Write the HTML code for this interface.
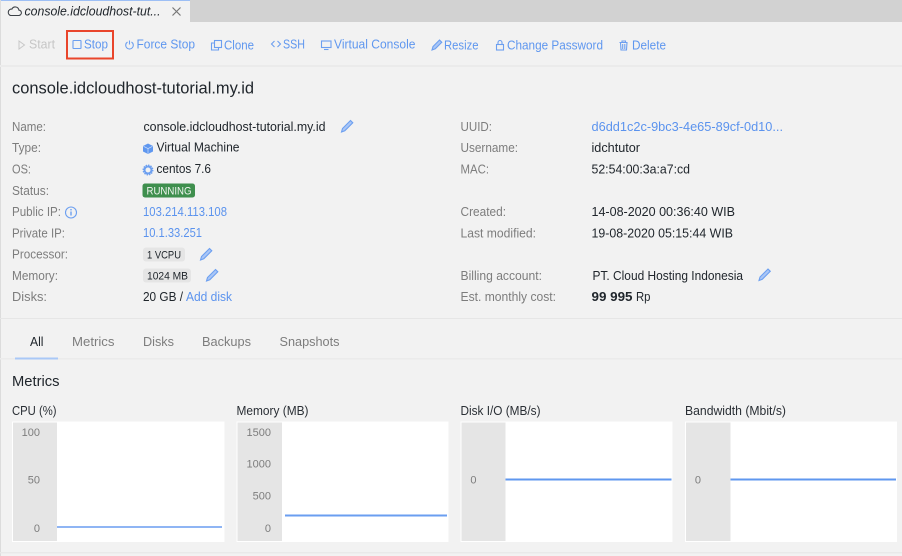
<!DOCTYPE html>
<html><head><meta charset="utf-8"><style>
html,body{margin:0;padding:0;background:#f2f2f2;width:902px;height:556px;overflow:hidden}
svg{display:block;position:absolute;left:0;top:0;filter:blur(.3px)}
text{font-family:"Liberation Sans",sans-serif;font-size:12.6px;fill:#20262c}
.l{fill:#7d7d7d}.b{fill:#5b93ee}.t{fill:#5f97ef}.g{fill:#7d7d7d;font-size:11px}.h{fill:#2a2f35}
.i{fill:none;stroke:#6c9ff0;stroke-width:1.1}
.p{fill:#a9c6f6;stroke:#6c9ff0;stroke-width:1.1}
</style></head><body>
<svg width="902" height="556" viewBox="0 0 902 556" xmlns="http://www.w3.org/2000/svg">
<rect width="902" height="556" fill="#f2f2f2"/>
<rect x="190" y="0" width="712" height="22" fill="#d2d2d2"/>
<rect x="0" y="0" width="190" height="1" fill="#9dbff5"/>
<rect x="0" y="0" width="1" height="556" fill="#dcdcdc"/>
<rect x="0" y="65" width="902" height="2" fill="#ebebeb"/>

<!-- tab -->
<path d="M10.500 15.500h8a2.700 2.700 0 0 0 .4-5.400 3.700 3.700 0 0 0-7-1 3.300 3.300 0 0 0-1.400 6.400z" fill="none" stroke="#3b4046" stroke-width="1.100"/>
<text x="24.500" y="15.500" font-style="italic" textLength="136" lengthAdjust="spacingAndGlyphs">console.idcloudhost-tut...</text>
<path d="M172.500 7.500l8 8M180.500 7.500l-8 8" stroke="#777" stroke-width="1.200" fill="none"/>

<!-- toolbar -->
<path d="M19 41l5.500 4-5.500 4z" fill="none" stroke="#c8c8c8" stroke-width="1"/>
<text x="29" y="48.500" style="fill:#c6c6c6" textLength="26" lengthAdjust="spacingAndGlyphs">Start</text>
<rect x="67" y="31" width="46" height="27.500" fill="none" stroke="#e9452b" stroke-width="2"/>
<rect x="73" y="40.500" width="8" height="8" class="i" rx=".5"/>
<text class="t" x="84" y="48.500" textLength="24" lengthAdjust="spacingAndGlyphs">Stop</text>
<path class="i" d="M127.500 42a3.800 3.800 0 1 0 4 0M129.500 40.500v4"/>
<text class="t" x="136.500" y="48.500" textLength="58.500" lengthAdjust="spacingAndGlyphs">Force Stop</text>
<rect class="i" x="214.500" y="40.500" width="7" height="7"/>
<path class="i" d="M214 43h-2.500v7h7v-2.500"/>
<text class="t" x="224" y="49.500" textLength="30" lengthAdjust="spacingAndGlyphs">Clone</text>
<path class="i" d="M274.500 41l-3 3 3 3M277.500 41l3 3-3 3"/>
<text class="t" x="283" y="48.500" textLength="22" lengthAdjust="spacingAndGlyphs">SSH</text>
<rect class="i" x="321.500" y="41" width="9.500" height="6.500"/>
<path class="i" d="M324 49.500h4.500"/>
<text class="t" x="334" y="48.500" textLength="81.500" lengthAdjust="spacingAndGlyphs">Virtual Console</text>
<path d="M432 50l1-3.500 6.500-6.500 2.300 2.300-6.500 6.500z" class="p"/>
<text class="t" x="444" y="49.500" textLength="34.500" lengthAdjust="spacingAndGlyphs">Resize</text>
<rect class="i" x="496.500" y="44.500" width="7" height="5.500"/>
<path class="i" d="M498 44.500v-2a2 2 0 0 1 4 0v2"/>
<text class="t" x="507" y="49.500" textLength="96" lengthAdjust="spacingAndGlyphs">Change Password</text>
<path class="i" d="M619.500 42.500h8M620.500 42.500l.5 7.500h5.500l.5-7.500M622 42.500v-1.500h3.500v1.500M622.700 44v5M624.800 44v5"/>
<text class="t" x="632" y="49.500" textLength="34" lengthAdjust="spacingAndGlyphs">Delete</text>

<text x="12" y="93.500" style="font-size:16.500px" textLength="242" lengthAdjust="spacingAndGlyphs">console.idcloudhost-tutorial.my.id</text>

<!-- left labels -->
<text class="l" x="12" y="131" textLength="34" lengthAdjust="spacingAndGlyphs">Name:</text>
<text class="l" x="12" y="152" textLength="29" lengthAdjust="spacingAndGlyphs">Type:</text>
<text class="l" x="12" y="173.500" textLength="19" lengthAdjust="spacingAndGlyphs">OS:</text>
<text class="l" x="12" y="195" textLength="37" lengthAdjust="spacingAndGlyphs">Status:</text>
<text class="l" x="12" y="216" textLength="49" lengthAdjust="spacingAndGlyphs">Public IP:</text>
<text class="l" x="12" y="237.500" textLength="53" lengthAdjust="spacingAndGlyphs">Private IP:</text>
<text class="l" x="12" y="258.500" textLength="56" lengthAdjust="spacingAndGlyphs">Processor:</text>
<text class="l" x="12" y="280" textLength="46" lengthAdjust="spacingAndGlyphs">Memory:</text>
<text class="l" x="12" y="301" textLength="35" lengthAdjust="spacingAndGlyphs">Disks:</text>

<circle cx="71" cy="212.500" r="5.500" class="i"/>
<rect x="70.300" y="211.500" width="1.400" height="4" fill="#6c9ff0"/><rect x="70.300" y="209" width="1.400" height="1.400" fill="#6c9ff0"/>

<!-- left values -->
<text x="143.500" y="131" textLength="182" lengthAdjust="spacingAndGlyphs">console.idcloudhost-tutorial.my.id</text>
<path d="M341.500 132l1-3.500 8-8 2.300 2.300-8 8z" class="p"/>
<path d="M148 143.500l5 2.500v5.500l-5 2.500-5-2.500V146z" fill="#5f97ef"/>
<path d="M143.500 146.300l4.500 2.300 4.500-2.300M148 148.600v5" stroke="#cfe0fb" stroke-width=".7" fill="none"/>
<text x="156.500" y="151.500" textLength="83" lengthAdjust="spacingAndGlyphs">Virtual Machine</text>
<circle cx="148" cy="170" r="3.500" fill="none" stroke="#6c9ff0" stroke-width="2"/>
<circle cx="148" cy="170" r="4.800" fill="none" stroke="#6c9ff0" stroke-width="1.300" stroke-dasharray="1.500 1"/>
<text x="156.500" y="173" textLength="54.500" lengthAdjust="spacingAndGlyphs">centos 7.6</text>
<rect x="142.500" y="183.500" width="52.500" height="14" rx="2.500" fill="#3f8f4e"/>
<text x="146.500" y="194.300" style="font-size:10.800px;fill:#f0f5f0" textLength="45" lengthAdjust="spacingAndGlyphs">RUNNING</text>
<text class="b" x="143" y="216" textLength="84" lengthAdjust="spacingAndGlyphs">103.214.113.108</text>
<text class="b" x="143" y="237" textLength="59" lengthAdjust="spacingAndGlyphs">10.1.33.251</text>
<rect x="143" y="247.500" width="42" height="14" rx="3" fill="#e5e5e5"/>
<text x="147" y="258.300" style="font-size:11px" textLength="34" lengthAdjust="spacingAndGlyphs">1 VCPU</text>
<path d="M200.500 260l1-3.500 8-8 2.300 2.300-8 8z" class="p"/>
<rect x="143" y="268.500" width="48" height="14" rx="3" fill="#e5e5e5"/>
<text x="147" y="279.300" style="font-size:11px" textLength="41" lengthAdjust="spacingAndGlyphs">1024 MB</text>
<path d="M206.500 281l1-3.500 8-8 2.300 2.300-8 8z" class="p"/>
<text x="143" y="301" textLength="40" lengthAdjust="spacingAndGlyphs">20 GB /</text>
<text class="b" x="186" y="301" textLength="46" lengthAdjust="spacingAndGlyphs">Add disk</text>

<!-- right labels -->
<text class="l" x="460.500" y="131" textLength="31.500" lengthAdjust="spacingAndGlyphs">UUID:</text>
<text class="l" x="460.500" y="152" textLength="57.500" lengthAdjust="spacingAndGlyphs">Username:</text>
<text class="l" x="460.500" y="173.500" textLength="28.500" lengthAdjust="spacingAndGlyphs">MAC:</text>
<text class="l" x="460.500" y="216" textLength="45.500" lengthAdjust="spacingAndGlyphs">Created:</text>
<text class="l" x="460.500" y="237.500" textLength="75.500" lengthAdjust="spacingAndGlyphs">Last modified:</text>
<text class="l" x="460.500" y="280" textLength="81.500" lengthAdjust="spacingAndGlyphs">Billing account:</text>
<text class="l" x="460.500" y="301" textLength="95.500" lengthAdjust="spacingAndGlyphs">Est. monthly cost:</text>

<!-- right values -->
<text class="b" x="591.500" y="131" textLength="191.500" lengthAdjust="spacingAndGlyphs">d6dd1c2c-9bc3-4e65-89cf-0d10...</text>
<text x="591.500" y="152" textLength="48.500" lengthAdjust="spacingAndGlyphs">idchtutor</text>
<text x="591.500" y="173.500" textLength="98.500" lengthAdjust="spacingAndGlyphs">52:54:00:3a:a7:cd</text>
<text x="591.500" y="216" textLength="143.500" lengthAdjust="spacingAndGlyphs">14-08-2020 00:36:40 WIB</text>
<text x="591.500" y="237.500" textLength="141.500" lengthAdjust="spacingAndGlyphs">19-08-2020 05:15:44 WIB</text>
<text x="592.500" y="280" textLength="150.500" lengthAdjust="spacingAndGlyphs">PT. Cloud Hosting Indonesia</text>
<path d="M759 280.500l1-3.500 8-8 2.300 2.300-8 8z" class="p"/>
<text x="591.500" y="301" font-weight="bold" textLength="41" lengthAdjust="spacingAndGlyphs">99 995</text>
<text x="636" y="301" textLength="14.500" lengthAdjust="spacingAndGlyphs">Rp</text>

<!-- tabs -->
<rect x="0" y="318" width="902" height="1" fill="#e6e6e6"/>
<rect x="0" y="358" width="902" height="1.500" fill="#ebebeb"/>
<rect x="15" y="357.500" width="43" height="2" fill="#a9c8f7"/>
<text x="30" y="346" textLength="13.500" lengthAdjust="spacingAndGlyphs">All</text>
<text class="l" x="72" y="346" textLength="42.500" lengthAdjust="spacingAndGlyphs">Metrics</text>
<text class="l" x="143" y="346" textLength="31" lengthAdjust="spacingAndGlyphs">Disks</text>
<text class="l" x="202" y="346" textLength="49" lengthAdjust="spacingAndGlyphs">Backups</text>
<text class="l" x="279.500" y="346" textLength="60" lengthAdjust="spacingAndGlyphs">Snapshots</text>

<text x="12" y="386" style="font-size:14.500px" textLength="47.500" lengthAdjust="spacingAndGlyphs">Metrics</text>

<!-- charts -->
<text class="h" x="12" y="415" textLength="44.500" lengthAdjust="spacingAndGlyphs">CPU (%)</text>
<text class="h" x="236.500" y="415" textLength="72" lengthAdjust="spacingAndGlyphs">Memory (MB)</text>
<text class="h" x="460.500" y="415" textLength="80" lengthAdjust="spacingAndGlyphs">Disk I/O (MB/s)</text>
<text class="h" x="685" y="415" textLength="101" lengthAdjust="spacingAndGlyphs">Bandwidth (Mbit/s)</text>

<rect x="12" y="421.500" width="212.500" height="120.500" fill="#fff"/>
<rect x="13" y="422.500" width="44" height="118.500" fill="#e5e5e5"/>
<rect x="236.500" y="421.500" width="212" height="120.500" fill="#fff"/>
<rect x="237.500" y="422.500" width="44.500" height="118.500" fill="#e5e5e5"/>
<rect x="460.500" y="421.500" width="212" height="120.500" fill="#fff"/>
<rect x="461.500" y="422.500" width="44" height="118.500" fill="#e5e5e5"/>
<rect x="685" y="421.500" width="212" height="120.500" fill="#fff"/>
<rect x="686" y="422.500" width="44.500" height="118.500" fill="#e5e5e5"/>

<text class="g" x="40" y="436" text-anchor="end">100</text>
<text class="g" x="40" y="483.500" text-anchor="end">50</text>
<text class="g" x="40" y="532" text-anchor="end">0</text>
<text class="g" x="271" y="436" text-anchor="end">1500</text>
<text class="g" x="271" y="467.500" text-anchor="end">1000</text>
<text class="g" x="271" y="499.500" text-anchor="end">500</text>
<text class="g" x="271" y="532" text-anchor="end">0</text>
<text class="g" x="476.500" y="483.500" text-anchor="end">0</text>
<text class="g" x="701" y="483.500" text-anchor="end">0</text>

<rect x="57" y="526" width="165" height="2" fill="#8fb5f4"/>
<rect x="285" y="514.500" width="162" height="2" fill="#6a9ef0"/>
<rect x="505.500" y="478.500" width="166" height="2" fill="#5f97ef"/>
<rect x="730.500" y="478.500" width="165.500" height="2" fill="#5f97ef"/>

<rect x="0" y="552" width="902" height="1.500" fill="#e9e9e9"/>
</svg>
</body></html>
